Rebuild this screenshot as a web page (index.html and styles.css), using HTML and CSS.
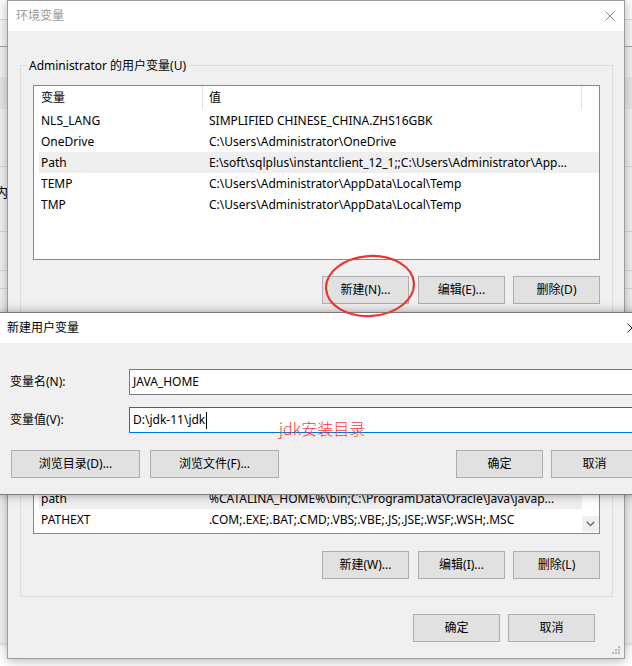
FILE: index.html
```html
<!DOCTYPE html>
<html lang="zh-CN">
<head>
<meta charset="utf-8">
<title>环境变量</title>
<link rel="stylesheet" href="styles.css">
</head>
<body>
<div class="backwin">
  <div class="bw-a"></div>
  <div class="bw-b"></div>
  <div class="bw-c"></div>
  <div class="bw-sel"></div>
  <div class="bw-d"></div>
  <div class="bw-e"><div class="bw-txt">路径内</div></div>
  <div class="bw-f"></div>
  <div class="bw-g"></div>
  <div class="bw-h"></div>
</div>

<div class="dlg main">
  <div class="titlebar">
    <span class="title inactive">环境变量</span>
    <svg class="close main-close" width="10" height="10" viewBox="0 0 10 10"><path d="M0.5 0.5 L9.5 9.5 M9.5 0.5 L0.5 9.5" stroke="#8a8a8a" stroke-width="1"/></svg>
  </div>
  <div class="dlg-body">
    <div class="group g1">
      <div class="legend">Administrator 的用户变量(U)</div>
      <div class="list l1">
        <div class="lhead"><div class="hc c1">变量</div><div class="hc c2">值</div><div class="hc c3"></div></div>
        <div class="lbody">
          <div class="rows">
            <div class="row"><span class="k">NLS_LANG</span><span class="v">SIMPLIFIED CHINESE_CHINA.ZHS16GBK</span></div>
            <div class="row"><span class="k">OneDrive</span><span class="v">C:\Users\Administrator\OneDrive</span></div>
            <div class="row sel"><span class="k">Path</span><span class="v">E:\soft\sqlplus\instantclient_12_1;;C:\Users\Administrator\App...</span></div>
            <div class="row"><span class="k">TEMP</span><span class="v">C:\Users\Administrator\AppData\Local\Temp</span></div>
            <div class="row"><span class="k">TMP</span><span class="v">C:\Users\Administrator\AppData\Local\Temp</span></div>
          </div>
        </div>
      </div>
      <div class="btns">
        <button class="btn">新建(N)...</button>
        <button class="btn b2">编辑(E)...</button>
        <button class="btn b3">删除(D)</button>
      </div>
    </div>

    <div class="group g2">
      <div class="legend">系统变量(S)</div>
      <div class="list l2">
        <div class="lhead"><div class="hc c1">变量</div><div class="hc c2">值</div><div class="hc c3"></div></div>
        <div class="lbody">
          <div class="rows">
            <div class="row"><span class="k">ComSpec</span><span class="v">C:\Windows\system32\cmd.exe</span></div>
            <div class="row"><span class="k">DriverData</span><span class="v">C:\Windows\System32\Drivers\DriverData</span></div>
            <div class="row"><span class="k">JAVA_HOME</span><span class="v">D:\jdk-11\jdk</span></div>
            <div class="row"><span class="k">NUMBER_OF_PROCESSORS</span><span class="v">4</span></div>
            <div class="row"><span class="k">OS</span><span class="v">Windows_NT</span></div>
            <div class="row sel"><span class="k">path</span><span class="v">%CATALINA_HOME%\bin;C:\ProgramData\Oracle\Java\javap...</span></div>
            <div class="row"><span class="k">PATHEXT</span><span class="v">.COM;.EXE;.BAT;.CMD;.VBS;.VBE;.JS;.JSE;.WSF;.WSH;.MSC</span></div>
          </div>
          <div class="vscroll">
            <div class="arrow"><svg width="9" height="6" viewBox="0 0 9 6"><path d="M0.8 0.8 L4.5 4.6 L8.2 0.8" fill="none" stroke="#606060" stroke-width="1.3"/></svg></div>
          </div>
        </div>
      </div>
      <div class="btns">
        <button class="btn">新建(W)...</button>
        <button class="btn b2">编辑(I)...</button>
        <button class="btn b3">删除(L)</button>
      </div>
    </div>

    <div class="okrow">
      <button class="btn">确定</button>
      <button class="btn">取消</button>
    </div>
  </div>
  <svg class="grip" width="10" height="10" viewBox="0 0 10 10">
    <rect x="7" y="1" width="2" height="2" fill="#b8b8b8"/>
    <rect x="4" y="4" width="2" height="2" fill="#b8b8b8"/>
    <rect x="7" y="4" width="2" height="2" fill="#b8b8b8"/>
    <rect x="1" y="7" width="2" height="2" fill="#b8b8b8"/>
    <rect x="4" y="7" width="2" height="2" fill="#b8b8b8"/>
    <rect x="7" y="7" width="2" height="2" fill="#b8b8b8"/>
  </svg>
</div>

<div class="dlg sub">
  <div class="titlebar sub-title">
    <span class="title">新建用户变量</span>
    <svg class="close sub-close" width="10" height="10" viewBox="0 0 10 10"><path d="M0.5 0.5 L9.5 9.5 M9.5 0.5 L0.5 9.5" stroke="#222" stroke-width="1"/></svg>
  </div>
  <div class="sub-body">
    <div class="field">
      <label class="flabel">变量名(N):</label>
      <div class="input">JAVA_HOME</div>
    </div>
    <div class="field f2">
      <label class="flabel">变量值(V):</label>
      <div class="input focus">D:\jdk-11\jdk<span class="caret"></span></div>
    </div>
    <div class="sub-btns">
      <button class="btn wide">浏览目录(D)...</button>
      <button class="btn wide">浏览文件(F)...</button>
      <span class="spacer"></span>
      <button class="btn">确定</button>
      <button class="btn">取消</button>
    </div>
  </div>
</div>

<svg class="ring" width="100" height="72" viewBox="0 0 100 72">
  <ellipse cx="50" cy="36" rx="44" ry="30" fill="none" stroke="#e8352f" stroke-width="2.2" transform="rotate(-4 50 36)"/>
</svg>
<div class="note">jdk安装目录</div>
</body>
</html>
```

FILE: styles.css
```css
* { box-sizing: border-box; }

body {
  margin: 0;
  width: 632px;
  height: 666px;
  overflow: hidden;
  position: relative;
  background: #ffffff;
  font-family: "Noto Sans", "Noto Sans CJK SC", sans-serif;
  font-size: 12px;
  color: #000;
}

/* background window */
.backwin {
  position: absolute;
  left: -400px;
  top: 0;
  width: 1100px;
  height: 643px;
  background: #f0f0f0;
  box-shadow: 0 0 6px rgba(0, 0, 0, 0.25);
  display: flex;
  flex-direction: column;
}
.bw-a { height: 20px; background: #fbfbfb; border-bottom: 1px solid #dadada; flex: none; }
.bw-b { height: 27px; background: #f6f6f6; border-bottom: 1px solid #a6a6a6; flex: none; }
.bw-c { height: 30px; flex: none; }
.bw-sel { height: 32px; background: #e5e5e5; flex: none; }
.bw-d { height: 58px; border-bottom: 1px solid #d4d4d4; flex: none; }
.bw-e { height: 65px; border-bottom: 1px solid #d4d4d4; flex: none; }
.bw-txt { width: 408px; text-align: right; padding-top: 16px; line-height: 18px; font-size: 13px; }
.bw-f { height: 39px; border-bottom: 1px solid #d4d4d4; flex: none; }
.bw-g { height: 18px; border-bottom: 1px solid #d4d4d4; flex: none; }
.bw-h { flex: 1; }

/* dialogs */
.dlg {
  position: absolute;
  background: #f0f0f0;
  border: 1px solid #9c9c9c;
  display: flex;
  flex-direction: column;
}
.main {
  left: 7px;
  top: 0;
  width: 618px;
  height: 659px;
  box-shadow: 0 2px 10px rgba(0, 0, 0, 0.28);
}
.titlebar {
  height: 30px;
  background: #ffffff;
  display: flex;
  align-items: center;
  justify-content: space-between;
  flex: none;
}
.main .titlebar { padding-left: 8px; padding-right: 9px; }
.title { font-size: 12px; line-height: 16px; }
.title.inactive { color: #9a9a9a; }
.close { display: block; }

.dlg-body {
  padding: 34px 0 0 12px;
  display: flex;
  flex-direction: column;
}

.group {
  width: 593px;
  border: 1px solid #dcdcdc;
  display: flex;
  flex-direction: column;
  padding: 0 12px 12px 12px;
}
.g2 { margin-top: 21px; padding-bottom: 17px; }
.legend {
  align-self: flex-start;
  margin-top: -8px;
  margin-left: -6px;
  padding: 0 2px;
  line-height: 16px;
  height: 16px;
  background: #f0f0f0;
  white-space: nowrap;
}

.list {
  margin-top: 11px;
  height: 175px;
  border: 1px solid #828790;
  background: #fff;
  display: flex;
  flex-direction: column;
}
.l2 { height: 176px; }
.lhead { height: 24px; display: flex; flex: none; }
.hc { height: 24px; line-height: 24px; }
.c1 { width: 169px; padding-left: 7px; border-right: 1px solid #e5e5e5; }
.c2 { flex: 1; padding-left: 6px; border-right: 1px solid #e5e5e5; }
.c3 { width: 17px; }
.lbody { flex: 1; display: flex; overflow: hidden; }
.rows { flex: 1; display: flex; flex-direction: column; padding-left: 5px; overflow: hidden; }
.row {
  height: 21px;
  line-height: 21px;
  display: flex;
  padding-left: 2px;
  white-space: nowrap;
  flex: none;
}
.row.sel { background: #efefef; }
.k { width: 168px; flex: none; overflow: hidden; }
.v { flex: 1; overflow: hidden; }
.vscroll {
  width: 17px;
  display: flex;
  flex-direction: column;
  justify-content: flex-end;
  padding-bottom: 1px;
}
.arrow {
  height: 16px;
  background: #f0f0f0;
  display: flex;
  align-items: center;
  justify-content: center;
}

.btns {
  margin-top: 16px;
  display: flex;
  justify-content: flex-end;
  gap: 8px;
}
.g2 .btns { margin-top: 17px; }
.btns .b2 { margin-left: 1px; }

.btn {
  height: 28px;
  width: 87px;
  border: 1px solid #adadad;
  background: #e1e1e1;
  font-family: "Noto Sans", "Noto Sans CJK SC", sans-serif;
  font-size: 12px;
  color: #000;
  padding: 0;
  line-height: 26px;
  white-space: nowrap;
}

.okrow {
  margin-top: 17px;
  display: flex;
  justify-content: flex-end;
  gap: 8px;
  padding-right: 29px;
}

.grip { position: absolute; right: 3px; bottom: 3px; }

/* sub dialog */
.sub {
  left: -1px;
  top: 312px;
  width: 651px;
  border-color: #7d7d7d;
  box-shadow: 0 0 10px rgba(0, 0, 0, 0.35);
}
.sub-title { padding-left: 7px; padding-right: 12px; }
.sub-body {
  padding: 26px 11px 16px 10px;
  display: flex;
  flex-direction: column;
}
.field { display: flex; align-items: center; height: 26px; }
.f2 { margin-top: 12px; }
.flabel { width: 119px; flex: none; line-height: 16px; }
.input {
  flex: 1;
  height: 26px;
  border: 1px solid #7a7a7a;
  background: #fff;
  padding-left: 3px;
  line-height: 24px;
  display: flex;
  align-items: center;
  white-space: nowrap;
}
.input.focus { border-color: #0078d7; }
.caret { display: inline-block; width: 1px; height: 17px; background: #000; margin-left: 1px; }

.sub-btns {
  margin-top: 17px;
  margin-left: 1px;
  display: flex;
  gap: 8px;
}
.btn.wide { width: 129px; }
.sub-btns .wide + .wide { margin-left: 2px; }
.spacer { flex: 1; }

/* annotations */
.ring { position: absolute; left: 320px; top: 250px; }
.note {
  position: absolute;
  left: 279px;
  top: 417px;
  font-family: "Noto Sans CJK SC", sans-serif;
  font-weight: 300;
  font-size: 16px;
  line-height: 22px;
  color: #ff3434;
  white-space: nowrap;
}
```
